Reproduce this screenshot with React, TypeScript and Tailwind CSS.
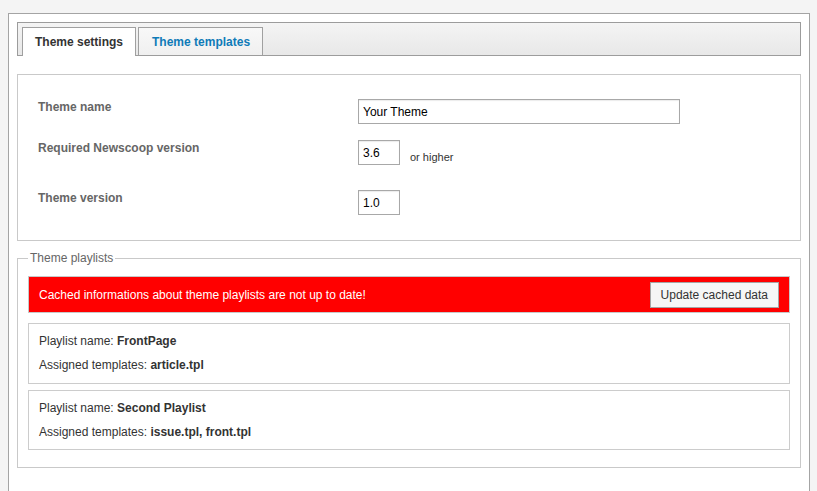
import React from "react";

const font = { fontFamily: '"Liberation Sans", Arial, Helvetica, sans-serif' };

function Field({ value, w }: { value: string; w: string }) {
  return (
    <input
      readOnly
      value={value}
      className={`${w} h-[25px] border border-[#a8a8a8] bg-white pl-[4px] text-[12px] text-black outline-none shadow-[inset_0_1px_1px_rgba(0,0,0,0.08)]`}
      style={font}
    />
  );
}

function Playlist({ name, templates, mt, pb }: { name: string; templates: string; mt: string; pb: string }) {
  return (
    <div className={`${mt} ${pb} border border-[#cccccc] bg-white px-[10px] pt-[10px] flex flex-col gap-[10px] text-[12px] leading-[14px] text-[#333]`}>
      <div>
        Playlist name: <b className="font-bold">{name}</b>
      </div>
      <div>
        Assigned templates: <b className="font-bold">{templates}</b>
      </div>
    </div>
  );
}

export default function App() {
  return (
    <div className="h-[491px] overflow-hidden bg-[#f4f4f4] pt-[13px]" style={font}>
      <div className="ml-[8px] w-[802px] border border-[#a4a4a4] bg-white p-[8px] pb-[60px]">
        {/* Tab bar */}
        <div className="h-[34px] border border-[#9c9c9c] bg-gradient-to-b from-[#f4f4f4] to-[#e8e8e8] px-[4px] pt-[4px] flex items-start gap-[2px]">
          <div className="relative z-10 h-[29px] -mb-[1px] border-t border-l border-r border-[#a0a0a0] bg-white px-[12px] flex items-center text-[12px] font-bold text-[#333]">
            Theme settings
          </div>
          <div className="h-[28px] border-t border-l border-r border-[#a0a0a0] bg-gradient-to-b from-[#f8f8f8] to-[#f0f0f0] px-[12px] pl-[13px] flex items-center text-[12px] font-bold text-[#0f7bb8]">
            Theme templates
          </div>
        </div>

        {/* Settings panel */}
        <div className="mt-[18px] border border-[#c9c9c9] px-[20px] pt-[24px] pb-[25px]">
          <div className="flex items-start">
            <div className="w-[320px] pt-[1px] text-[12px] leading-[14px] font-bold text-[#666]">Theme name</div>
            <Field value="Your Theme" w="w-[322px]" />
          </div>
          <div className="mt-[16px] flex items-start">
            <div className="w-[320px] pt-[1px] text-[12px] leading-[14px] font-bold text-[#666]">Required Newscoop version</div>
            <Field value="3.6" w="w-[42px]" />
            <span className="ml-[10px] mt-[11px] text-[11px] leading-[13px] text-[#333]">or higher</span>
          </div>
          <div className="mt-[25px] flex items-start">
            <div className="w-[320px] pt-[1px] text-[12px] leading-[14px] font-bold text-[#666]">Theme version</div>
            <Field value="1.0" w="w-[42px]" />
          </div>
        </div>

        {/* Playlists */}
        <fieldset className="mt-[10px] border border-[#c9c9c9] px-[10px] pt-[11px] pb-[17px]">
          <legend className="px-[2px] text-[12px] leading-[14px] text-[#666]">Theme playlists</legend>
          <div className="h-[37px] border border-[#c8c8c8] bg-[#ff0000] pl-[10px] pr-[10px] flex items-center text-[12px] text-white">
            <span>Cached informations about theme playlists are not up to date!</span>
            <button
              className="ml-auto h-[26px] border border-[#a5a5a5] bg-[#f6f6f6] px-[10px] text-[12px] text-[#333]"
              style={font}
            >
              Update cached data
            </button>
          </div>
          <Playlist mt="mt-[10px]" pb="pb-[11px]" name="FrontPage" templates="article.tpl" />
          <Playlist mt="mt-[6px]" pb="pb-[10px]" name="Second Playlist" templates="issue.tpl, front.tpl" />
        </fieldset>
      </div>
    </div>
  );
}
